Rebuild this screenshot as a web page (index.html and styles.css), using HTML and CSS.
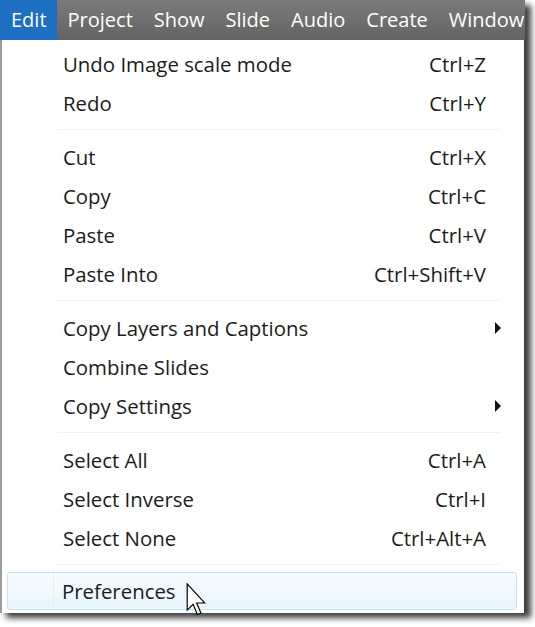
FILE: index.html
```html
<!DOCTYPE html>
<html>
<head>
<meta charset="utf-8">
<link rel="stylesheet" href="styles.css">
</head>
<body>
<div class="screen">
  <nav class="menubar">
    <span class="mb-item active">Edit</span>
    <span class="mb-item">Project</span>
    <span class="mb-item">Show</span>
    <span class="mb-item">Slide</span>
    <span class="mb-item">Audio</span>
    <span class="mb-item">Create</span>
    <span class="mb-item">Window</span>
  </nav>
  <div class="menu">
    <div class="row"><span class="label">Undo Image scale mode</span><span class="key">Ctrl+Z</span><span class="sub"></span></div>
    <div class="row"><span class="label">Redo</span><span class="key">Ctrl+Y</span><span class="sub"></span></div>
    <div class="sep"></div>
    <div class="row"><span class="label">Cut</span><span class="key">Ctrl+X</span><span class="sub"></span></div>
    <div class="row"><span class="label">Copy</span><span class="key">Ctrl+C</span><span class="sub"></span></div>
    <div class="row"><span class="label">Paste</span><span class="key">Ctrl+V</span><span class="sub"></span></div>
    <div class="row"><span class="label">Paste Into</span><span class="key">Ctrl+Shift+V</span><span class="sub"></span></div>
    <div class="sep"></div>
    <div class="row"><span class="label">Copy Layers and Captions</span><span class="key"></span><span class="sub"><span class="arrow"></span></span></div>
    <div class="row"><span class="label">Combine Slides</span><span class="key"></span><span class="sub"></span></div>
    <div class="row"><span class="label">Copy Settings</span><span class="key"></span><span class="sub"><span class="arrow"></span></span></div>
    <div class="sep"></div>
    <div class="row"><span class="label">Select All</span><span class="key">Ctrl+A</span><span class="sub"></span></div>
    <div class="row"><span class="label">Select Inverse</span><span class="key">Ctrl+I</span><span class="sub"></span></div>
    <div class="row"><span class="label">Select None</span><span class="key">Ctrl+Alt+A</span><span class="sub"></span></div>
    <div class="sep"></div>
    <div class="row hover"><span class="label">Preferences</span><span class="key"></span><span class="sub"></span>
      <svg class="cursor" width="21" height="33" viewBox="0 0 12 19.5"><path d="M0.5 0.5 L0.5 16 L4 12.6 L6.5 18.6 L8.6 17.7 L6.1 11.8 L10.8 11.8 Z" fill="#fff" stroke="#000" stroke-width="0.7" stroke-linejoin="miter"/></svg>
    </div>
  </div>
</div>
</body>
</html>
```
FILE: styles.css
```css
html, body {
  margin: 0;
  padding: 0;
  background: #ffffff;
}
body {
  width: 535px;
  height: 627px;
  overflow: hidden;
  font-family: "Open Sans", "Noto Sans", sans-serif;
}
.screen {
  width: 525px;
  box-shadow: 6px 5px 6px rgba(0, 0, 0, 0.75);
  background: #fff;
}
.menubar {
  height: 40px;
  display: flex;
  align-items: stretch;
  gap: 21px;
  background: linear-gradient(#7b7b7b, #636363);
  overflow: hidden;
  white-space: nowrap;
}
.mb-item {
  display: flex;
  align-items: center;
  color: #ffffff;
  font-size: 20px;
  padding-bottom: 2px;
}
.mb-item.active {
  background: #1c6fc1;
  padding-left: 11px;
  padding-right: 10px;
  margin-right: -10px;
}
.menu {
  border-left: 2px solid #9c9c9c;
  border-right: 1px solid #3a3a3a;
  padding: 4px 0 0 0;
  height: 569px;
  background: #ffffff;
}
.row {
  position: relative;
  height: 39px;
  display: grid;
  grid-template-columns: 1fr auto 38px;
  align-items: center;
  padding-left: 61px;
  font-size: 20.4px;
  color: #1b1b1b;
}
.key {
  text-align: right;
}
.sub {
  display: flex;
  align-items: center;
  padding-left: 9px;
}
.arrow {
  width: 0;
  height: 0;
  border-top: 6px solid transparent;
  border-bottom: 6px solid transparent;
  border-left: 6px solid #111;
}
.sep {
  height: 15px;
  display: flex;
  align-items: center;
  padding-left: 55px;
  padding-right: 24px;
}
.sep::before {
  content: "";
  flex: 1;
  height: 1px;
  background: #f1f1f1;
}
.row.hover {
  margin: 0 7px 0 5px;
  padding-left: 54px;
  border: 1px solid #c5e3f2;
  border-radius: 3px;
  background: linear-gradient(#f6fcff, #e9f6fd);
  height: 36px;
}
.row.hover::before {
  content: "";
  position: absolute;
  left: 45px;
  top: 0;
  bottom: 0;
  width: 1px;
  background: #e2f0f7;
}
.cursor {
  position: absolute;
  left: 178px;
  top: 10px;
}
```
